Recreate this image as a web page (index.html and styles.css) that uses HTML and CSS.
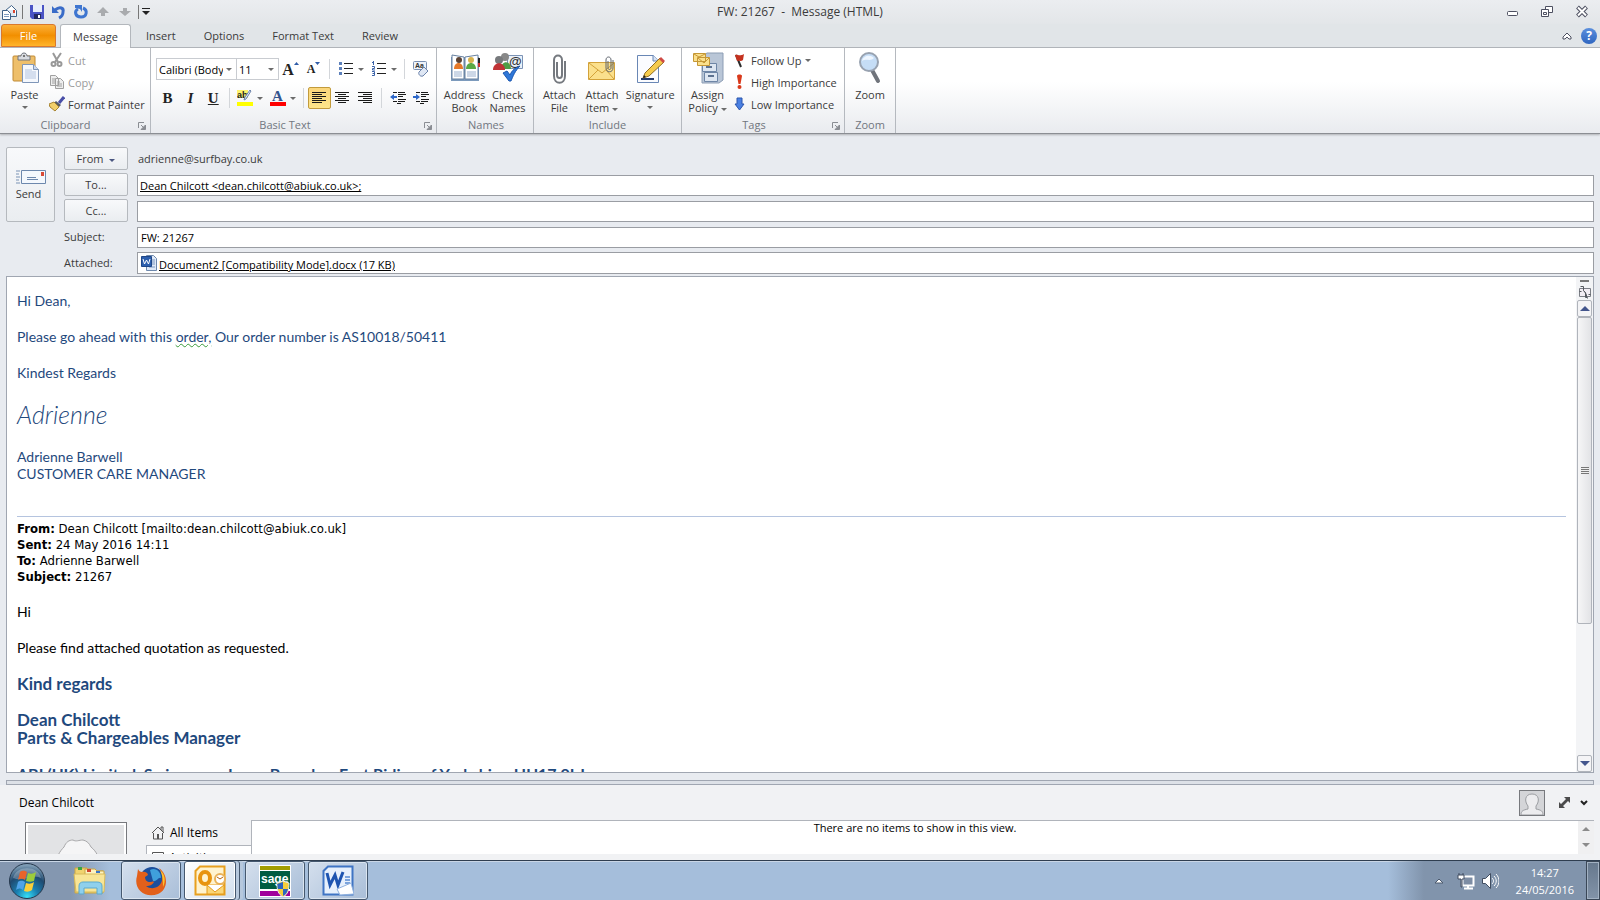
FILE: index.html
```
<!DOCTYPE html>
<html lang="en">
<head>
    <meta charset="UTF-8">
    <meta name="viewport" content="width=device-width, initial-scale=1.0">
    <title>FW: 21267 - Message (HTML)</title>
    <link rel="stylesheet" href="styles.css">
</head>
<body>
    <header class="titlebar">
        <div class="quick-access">
            <svg width="20" height="18" viewBox="0 0 20 18"><path d="M5.500 7.500l6-5 5 5v6h-11z" fill="#fff" stroke="#3f6187"/><path d="M7 7h8v6H7z" fill="#dce7f4"/><path d="M13 7h2v3h-2z" fill="#d9432f"/><path d="M2.500 7.500h5l3 3v6h-8z" fill="#fff" stroke="#3f6187"/><path d="M4 11.500h5M4 13.500h5" stroke="#7f9cc0"/></svg>
            <span class="bar-line"></span>
            <button class="quick-btn" aria-label="Save"><svg width="16" height="16" viewBox="0 0 16 16"><path d="M1 1h14v14H3l-2-2z" fill="#4a53c4"/><path d="M4 1h9v7H4z" fill="#e8eefb"/><path d="M5 10h7v5H5z" fill="#23285f"/><path d="M9 11h2v3H9z" fill="#fff"/></svg></button>
            <button class="quick-btn" aria-label="Undo"><svg width="16" height="16" viewBox="0 0 16 16"><path d="M4 6c5-4 9-2 8 2 0 3-2 5-4 6" fill="none" stroke="#3a6cc8" stroke-width="3"/><path d="M1 2v7h7z" fill="#3a6cc8"/></svg></button>
            <button class="quick-btn" aria-label="Repeat"><svg width="16" height="16" viewBox="0 0 16 16"><path d="M10 4c5 2 4 9-2 9S1 7 5 5" fill="none" stroke="#3f76d0" stroke-width="3"/><path d="M2 1h7v7L7 5 2 4z" fill="#3f76d0"/></svg></button>
            <button class="quick-btn" aria-label="Previous"><svg width="16" height="16" viewBox="0 0 16 16"><path d="M8 3l6 6h-4v3H6V9H2z" fill="#a9abae"/></svg></button>
            <button class="quick-btn" aria-label="Next"><svg width="16" height="16" viewBox="0 0 16 16"><path d="M8 12l6-5h-4V4H6v3H2z" fill="#a9abae"/></svg></button>
            <span class="bar-line"></span>
            <button class="more-btn" aria-label="Customize"><svg width="8" height="8" viewBox="0 0 8 8"><path d="M0 0h8v1H0zM0 3h8L4 7z" fill="#222"/></svg></button>
        </div>
        <h1 class="window-title">FW: 21267 &nbsp;- &nbsp;Message (HTML)</h1>
        <div class="window-controls">
            <button aria-label="Minimize"><svg width="14" height="14" viewBox="0 0 14 14"><rect x="2.500" y="6.500" width="10" height="4" rx="1" fill="#fff" stroke="#4d5061"/></svg></button>
            <button aria-label="Restore"><svg width="14" height="14" viewBox="0 0 14 14"><path d="M5.500 1.500h7v6h-7z" fill="#fff" stroke="#4d5061"/><path d="M1.500 4.500h7v7h-7z" fill="#fff" stroke="#4d5061"/><path d="M3.500 7.500h3v2h-3z" fill="none" stroke="#4d5061"/></svg></button>
            <button aria-label="Close"><svg width="14" height="14" viewBox="0 0 14 14"><path d="M2.500 2L11.500 11M11.500 2L2.500 11" stroke="#4d5061" stroke-width="4"/><path d="M3 2.500L11 10.500M11 2.500L3 10.500" stroke="#fff" stroke-width="2"/></svg></button>
        </div>
    </header>

    <nav class="tabs">
        <button class="tab tab-file">File</button>
        <button class="tab tab-active">Message</button>
        <button class="tab">Insert</button>
        <button class="tab">Options</button>
        <button class="tab">Format Text</button>
        <button class="tab">Review</button>
        <div class="tabs-right">
            <button aria-label="Minimize ribbon"><svg width="10" height="8" viewBox="0 0 10 8"><path d="M1 5l4-4 4 4v2H7L5 5 3 7H1z" fill="#fff" stroke="#4d5061"/></svg></button>
            <button class="help-btn" aria-label="Help">?</button>
        </div>
    </nav>

    <main class="ribbon">
        <section class="group group-clipboard">
            <div class="group-body">
                <button class="big-btn">
                    <svg width="32" height="32" viewBox="0 0 32 32"><rect x="4" y="4" width="22" height="25" rx="1" fill="#eebf6b" stroke="#c08a35"/><path d="M9 4h3c0-4 6-4 6 0h3v4H9z" fill="#d8dbe0" stroke="#70757d"/><circle cx="15" cy="4" r="1" fill="#555"/><path d="M13.500 12.500h11l5 5v13h-16z" fill="#f5f8fd" stroke="#7f96b8"/><path d="M24.500 12.500v5h5" fill="#cddaf0" stroke="#7f96b8"/><path d="M16 18h7M16 20h11M16 22h11M16 24h11M16 26h11" stroke="#b3c4df"/></svg>
                    <span>Paste</span><i class="arrow"></i>
                </button>
                <div class="small-list">
                    <button class="small-btn" disabled><svg width="16" height="16" viewBox="0 0 16 16"><path d="M4 1l5 9M12 1L6 10" stroke="#999" stroke-width="2"/><circle cx="4.500" cy="12" r="2" fill="none" stroke="#999" stroke-width="2"/><circle cx="10.500" cy="12" r="2" fill="none" stroke="#999" stroke-width="2"/></svg>Cut</button>
                    <button class="small-btn" disabled><svg width="16" height="16" viewBox="0 0 16 16"><path d="M1.500 1.500h5l3 3v7h-8zM6.500 4.500h5l3 3v7h-8z" fill="#eee" stroke="#a0a0a0"/><path d="M3 5h3M3 7h3M3 9h3M8 8h3M8 10h5M8 12h5" stroke="#a0a0a0"/></svg>Copy</button>
                    <button class="small-btn"><svg width="16" height="16" viewBox="0 0 16 16"><path d="M15 1l-5 6" stroke="#4a4fa8" stroke-width="3"/><path d="M7 5l5 4-2 2-5-4z" fill="#555b66"/><path d="M5 6l5 5-4 4-5-4-1-3z" fill="#f1cf6b" stroke="#a78432"/></svg>Format Painter</button>
                </div>
            </div>
            <h2 class="group-label has-launcher">Clipboard</h2>
            <button class="launcher" aria-label="Clipboard options"><svg width="8" height="8" viewBox="0 0 8 8"><path d="M.5 6V.5H6" fill="none" stroke="#8a8d93"/><path d="M7.500 3v4.500H3L7.500 3zM3 3l3 3" fill="#8a8d93" stroke="#8a8d93"/></svg></button>
        </section>

        <section class="group group-text">
            <div class="text-rows">
                <div class="text-row">
                    <label class="picker picker-font"><select aria-label="Font"><option>Calibri (Body)</option></select><i class="arrow"></i></label>
                    <label class="picker picker-size"><select aria-label="Font size"><option>11</option></select><i class="arrow"></i></label>
                    <button class="tool-btn letter" aria-label="Grow font"><span class="letter-grow">A</span><svg class="mark" width="5" height="4" viewBox="0 0 5 4"><path d="M0 3l2.500-3L5 3z" fill="#2f5ca8"/></svg></button>
                    <button class="tool-btn letter" aria-label="Shrink font"><span class="letter-shrink">A</span><svg class="mark" width="5" height="4" viewBox="0 0 5 4"><path d="M0 0l2.500 3L5 0z" fill="#2f5ca8"/></svg></button>
                    <span class="sep"></span>
                    <button class="tool-btn split" aria-label="Bullets"><svg width="16" height="16" viewBox="0 0 16 16"><path d="M6 2.500h9M6 7.500h9M6 12.500h9" stroke="#222"/><path d="M1 1h3v3H1zM1 6h3v3H1zM1 11h3v3H1z" fill="#5c80bb"/></svg><i class="arrow"></i></button>
                    <button class="tool-btn split" aria-label="Numbering"><svg width="16" height="16" viewBox="0 0 16 16"><path d="M6 2.500h9M6 7.500h9M6 12.500h9" stroke="#222"/><path d="M2.500 0v4M1 1.500h2M1 5.500h2.500v2H1.500v1.500H4M1 10.500h2.500v4H1M1.500 12.500H3" fill="none" stroke="#3a62a8"/></svg><i class="arrow"></i></button>
                    <span class="sep"></span>
                    <button class="tool-btn" aria-label="Clear formatting"><svg width="18" height="18" viewBox="0 0 18 18"><rect x="1.500" y="1.500" width="13" height="8" rx="1" fill="#eef3fa" stroke="#7a90b3"/><text x="3" y="8" class="icon-text">Aa</text><path d="M7 12l5-5 4 4-5 5c-3 1-5-2-4-4z" fill="#dfe7f4" stroke="#6c83ab"/></svg></button>
                </div>
                <div class="text-row">
                    <button class="tool-btn fmt"><b>B</b></button>
                    <button class="tool-btn fmt"><em>I</em></button>
                    <button class="tool-btn fmt"><u>U</u></button>
                    <span class="sep"></span>
                    <button class="tool-btn split" aria-label="Highlight"><svg width="16" height="16" viewBox="0 0 16 16"><path d="M0 0h11v8H0z" fill="#fdf36a"/><text x="0" y="8" class="icon-ab">ab</text><path d="M14 1l-5 8-2 1 1-3 5-7z" fill="#e4ecf7" stroke="#6c83ab"/><path d="M0 12h16v4H0z" fill="#ffff00"/></svg><i class="arrow"></i></button>
                    <button class="tool-btn split" aria-label="Font color"><svg width="16" height="16" viewBox="0 0 16 16"><text x="2" y="11" class="icon-a">A</text><path d="M0 12h16v4H0z" fill="#f00"/></svg><i class="arrow"></i></button>
                    <span class="sep"></span>
                    <button class="tool-btn pressed" aria-label="Align left"><svg width="15" height="14" viewBox="0 0 15 14"><path d="M0 1.500h14M0 3.500h10M0 5.500h14M0 7.500h10M0 9.500h14M0 11.500h10" stroke="#1a1a1a"/></svg></button>
                    <button class="tool-btn" aria-label="Center"><svg width="15" height="14" viewBox="0 0 15 14"><path d="M0 1.500h14M3 3.500h8M0 5.500h14M3 7.500h8M0 9.500h14M3 11.500h8" stroke="#1a1a1a"/></svg></button>
                    <button class="tool-btn" aria-label="Align right"><svg width="15" height="14" viewBox="0 0 15 14"><path d="M0 1.500h14M5 3.500h9M0 5.500h14M5 7.500h9M0 9.500h14M5 11.500h9" stroke="#1a1a1a"/></svg></button>
                    <span class="sep"></span>
                    <button class="tool-btn" aria-label="Decrease indent"><svg width="16" height="14" viewBox="0 0 16 14"><path d="M3 1.500h4M8 1.500h7M8 3.500h8M8 5.500h5M8 8.500h8M3 10.500h4M8 10.500h7M7 12.500h4" stroke="#1a1a1a"/><path d="M0 6l4-3v2h3v2H4v2z" fill="#2d67c9"/></svg></button>
                    <button class="tool-btn" aria-label="Increase indent"><svg width="16" height="14" viewBox="0 0 16 14"><path d="M3 1.500h4M8 1.500h7M8 3.500h8M8 5.500h5M8 8.500h8M3 10.500h4M8 10.500h7M7 12.500h4" stroke="#1a1a1a"/><path d="M7 6L3 3v2H0v2h3v2z" fill="#2d67c9"/></svg></button>
                </div>
            </div>
            <h2 class="group-label has-launcher">Basic Text</h2>
            <button class="launcher" aria-label="Font options"><svg width="8" height="8" viewBox="0 0 8 8"><path d="M.5 6V.5H6" fill="none" stroke="#8a8d93"/><path d="M7.500 3v4.500H3L7.500 3zM3 3l3 3" fill="#8a8d93" stroke="#8a8d93"/></svg></button>
        </section>

        <section class="group group-names">
            <div class="group-body">
                <button class="big-btn">
                    <svg width="32" height="32" viewBox="0 0 32 32"><path d="M2 5h28v24H2z" fill="#7c9abc"/><path d="M3 3l12 2v22H3zM29 3L16 5v22h13z" fill="#fff" stroke="#66809f"/><path d="M29 6h2v5h-2z" fill="#222"/><path d="M29 11h2v4h-2z" fill="#c33"/><circle cx="10" cy="8" r="3" fill="#5b4234"/><path d="M5 17c0-8 9-8 9 0z" fill="#e5792a"/><circle cx="22" cy="8" r="3" fill="#d8b34e"/><path d="M17 17c0-8 10-8 10 0z" fill="#5aa845"/><path d="M5 20h8M5 22h8M5 24h8M18 20h9M18 22h9M18 24h9" stroke="#9ab0ce"/></svg>
                    <span>Address<br>Book</span>
                </button>
                <button class="big-btn">
                    <svg width="32" height="32" viewBox="0 0 32 32"><path d="M15.500 3.500h15v13h-15z" fill="#eaf1fa" stroke="#7c93b5"/><text x="17" y="14" class="icon-at">@</text><circle cx="13" cy="5" r="4" fill="#888"/><path d="M9 17c0-9 10-9 10 0z" fill="#4f9d46"/><circle cx="7" cy="8" r="4" fill="#77797c"/><path d="M1 18c0-9 12-9 12 0z" fill="#c03336"/><path d="M11 21l4-2 3 4c2-5 5-7 10-9-5 5-7 10-9 15h-2z" fill="#2f77d8" stroke="#1b57b0"/></svg>
                    <span>Check<br>Names</span>
                </button>
            </div>
            <h2 class="group-label">Names</h2>
        </section>

        <section class="group group-include">
            <div class="group-body">
                <button class="big-btn">
                    <svg width="32" height="32" viewBox="0 0 32 32"><path d="M14 10v13c0 4 5 4 5 0V8c0-6-8-6-8 0v16c0 9 11 9 11 0V9" fill="none" stroke="#75797f" stroke-width="2"/></svg>
                    <span>Attach<br>File</span>
                </button>
                <button class="big-btn">
                    <svg width="32" height="32" viewBox="0 0 32 32"><path d="M2.500 10.500h26v17h-26z" fill="#fbe08c" stroke="#d3a23a"/><path d="M3 11l13 10 12-10M3 27l9-9M28 27l-8-9" fill="none" stroke="#d3a23a"/><path d="M22 9v7c0 2 3 2 3 0V8c0-4-5-4-5 0v8c0 5 7 5 7 0V8" fill="none" stroke="#5e646d"/></svg>
                    <span>Attach<br>Item <i class="arrow"></i></span>
                </button>
                <button class="big-btn big-wide">
                    <svg width="32" height="32" viewBox="0 0 32 32"><path d="M3.500 3.500h16l5 5v22h-21z" fill="#fbfcff" stroke="#6987b5"/><path d="M19 3v6h6" fill="#d7e2f3" stroke="#6987b5"/><path d="M7 27h13" stroke="#223c70" stroke-width="2"/><path d="M9 26l2-5L26 6l4 4-15 14z" fill="#f5cb4d" stroke="#8f6d22"/><path d="M25 7l2-2 4 4-2 2z" fill="#cf4a45"/><path d="M9 26l1-3 2 2z" fill="#222"/></svg>
                    <span>Signature</span><i class="arrow"></i>
                </button>
            </div>
            <h2 class="group-label">Include</h2>
        </section>

        <section class="group group-tags">
            <div class="group-body">
                <button class="big-btn">
                    <svg width="32" height="32" viewBox="0 0 32 32"><path d="M12 3l3-2h16v27l-4 3H10V5z" fill="#b9c6d7" stroke="#8c9db4"/><path d="M10.500 11.500h14v8h-14zM12.500 20.500h13v9h-13z" fill="#dde6f1" stroke="#6e86a6"/><path d="M14 15h6M16 24h6" stroke="#5d7290" stroke-width="2"/><path d="M1.500 1.500h12v8h-12zM5.500 5.500h12v8h-12z" fill="#fbe08c" stroke="#c59735"/><path d="M6 6l6 5 5-5M2 2l5 3 6-3" fill="none" stroke="#c59735"/></svg>
                    <span>Assign<br>Policy <i class="arrow"></i></span>
                </button>
                <div class="small-list">
                    <button class="small-btn"><svg width="16" height="16" viewBox="0 0 16 16"><path d="M4 3l5 12" stroke="#2b2b2b" stroke-width="2"/><path d="M3 3c3-1 4 2 9-1l-1 6c-3 2-3 0-6 1z" fill="#c4321f"/></svg>Follow Up <i class="arrow"></i></button>
                    <button class="small-btn"><svg width="16" height="16" viewBox="0 0 16 16"><path d="M5 2c0-2 5-2 5 0L8.500 10h-2z" fill="#d9391b"/><circle cx="7.500" cy="13" r="2" fill="#d9391b"/></svg>High Importance</button>
                    <button class="small-btn"><svg width="16" height="16" viewBox="0 0 16 16"><path d="M5 2h5v6h2l-4.500 6L3 8h2z" fill="#4a80e2" stroke="#2a55ad"/></svg>Low Importance</button>
                </div>
            </div>
            <h2 class="group-label has-launcher">Tags</h2>
            <button class="launcher" aria-label="Tag options"><svg width="8" height="8" viewBox="0 0 8 8"><path d="M.5 6V.5H6" fill="none" stroke="#8a8d93"/><path d="M7.500 3v4.500H3L7.500 3zM3 3l3 3" fill="#8a8d93" stroke="#8a8d93"/></svg></button>
        </section>

        <section class="group group-zoom">
            <div class="group-body">
                <button class="big-btn">
                    <svg width="32" height="32" viewBox="0 0 32 32"><path d="M18 18l6 11" stroke="#70747b" stroke-width="4" stroke-linecap="round"/><circle cx="15" cy="10" r="9" fill="#c5ddf6" stroke="#98a2b0" stroke-width="2"/><path d="M8 9c1-5 8-7 12-3-4 4-7 0-12 3z" fill="#eef6ff"/></svg>
                    <span>Zoom</span>
                </button>
            </div>
            <h2 class="group-label">Zoom</h2>
        </section>
    </main>

    <form class="compose">
        <button type="button" class="send-btn">
            <svg width="30" height="16" viewBox="0 0 30 16"><path d="M5.500 1.500h24v13h-24z" fill="#f4f8fd" stroke="#6d88ad"/><path d="M0 2h4M0 5h3M0 8h4M0 11h3M0 14h4" stroke="#7b93b5"/><path d="M25 3h3v4h-3z" fill="#d94a36"/><path d="M11 8.500h9M11 10.500h11" stroke="#6d88ad"/></svg>
            <span>Send</span>
        </button>
        <div class="fields">
            <button type="button" class="field-btn">From <i class="arrow arrow-blue"></i></button>
            <output class="from-value">adrienne@surfbay.co.uk</output>
            <button type="button" class="field-btn">To...</button>
            <input class="field underlined" aria-label="To" value="Dean Chilcott &lt;dean.chilcott@abiuk.co.uk&gt;;">
            <button type="button" class="field-btn">Cc...</button>
            <input class="field" aria-label="Cc">
            <label class="field-label" for="subject">Subject:</label>
            <input class="field" id="subject" value="FW: 21267">
            <span class="field-label">Attached:</span>
            <div class="field attachment">
                <svg width="16" height="16" viewBox="0 0 16 16"><path d="M5.500.5h7l3 3v12h-10z" fill="#dfe9f7" stroke="#6d88ad"/><path d="M11 5h3M11 7h3M11 9h3M8 12h6" stroke="#7d99c2"/><path d="M.5 1.500h10v10H.5z" fill="#2c5fae" stroke="#1f4788"/><path d="M2 4l1.500 5L5.500 5l2 4L9 4" fill="none" stroke="#fff"/></svg>
                <a href="#">Document2 [Compatibility Mode].docx (17 KB)</a>
            </div>
        </div>
    </form>

    <div class="editor">
        <article class="message">
            <p>Hi Dean,</p>
            <p>Please go ahead with this <span class="grammar">order,</span> Our order number is AS10018/50411</p>
            <p>Kindest Regards</p>
            <p class="signature">Adrienne</p>
            <p class="sender">Adrienne Barwell<br>CUSTOMER CARE MANAGER</p>
            <div class="quoted-head">
                <b>From:</b> Dean Chilcott [mailto:dean.chilcott@abiuk.co.uk]<br>
                <b>Sent:</b> 24 May 2016 14:11<br>
                <b>To:</b> Adrienne Barwell<br>
                <b>Subject:</b> 21267
            </div>
            <div class="quoted">
                <p>Hi</p>
                <p>Please find attached quotation as requested.</p>
            </div>
            <div class="quoted-sign">
                <p>Kind regards</p>
                <p>Dean Chilcott<br>Parts &amp; Chargeables Manager</p>
                <p class="address">ABI (UK) Limited, Swinemoor Lane, Beverley, East Riding of Yorkshire, HU17 0LJ</p>
            </div>
        </article>
        <div class="scrollbar">
            <span class="split-handle"></span>
            <svg width="14" height="14" viewBox="0 0 14 14"><path d="M1.500 2.500h11v8h-11z" fill="#f3eef4" stroke="#7b7e85"/><path d="M2.500.5h3v4l2 2v5h2v1M5.500 4.500l3 4v3M1.500 5.500h2M10.500 8.500h2" fill="none" stroke="#55585e"/></svg>
            <button class="scroll-btn" aria-label="Scroll up"><svg width="10" height="5" viewBox="0 0 10 5"><path d="M0 5l5-5 5 5z" fill="#43558c"/></svg></button>
            <div class="scroll-thumb"><span></span></div>
            <button class="scroll-btn scroll-down" aria-label="Scroll down"><svg width="10" height="5" viewBox="0 0 10 5"><path d="M0 0l5 5 5-5z" fill="#43558c"/></svg></button>
        </div>
    </div>

    <aside class="people">
        <div class="splitter"></div>
        <div class="people-head">
            <span class="people-name">Dean Chilcott</span>
            <button class="avatar" aria-label="Dean Chilcott"><svg width="24" height="24" viewBox="0 0 24 24"><path d="M1 24c0-4 2-5 7-6v-3C4 10 5 3 12 3s8 7 4 12v3c5 1 7 2 7 6z" fill="#ececee" stroke="#9b9da1"/></svg></button>
            <button class="people-btn" aria-label="Expand"><svg width="11" height="11" viewBox="0 0 11 11"><path d="M5 0h6v6L9 4 4 9l2 2H0V5l2 2 5-5z" fill="#4b4b4b"/></svg></button>
            <button class="people-btn" aria-label="Collapse"><svg width="8" height="6" viewBox="0 0 8 6"><path d="M1 1l3 3 3-3" fill="none" stroke="#222" stroke-width="2"/></svg></button>
        </div>
        <div class="people-body">
            <div class="photo"><svg width="96" height="96" viewBox="0 0 96 96"><path d="M28 40c0-8 4-14 8-18 2-5 5-7 9-7 3 2 6 0 10 0 4 1 6 3 8 7 6 5 8 10 8 18-2 20-10 30-22 30S28 60 28 40z" fill="#f5f5f6" stroke="#a8a8aa"/></svg></div>
            <div class="people-tabs">
                <button class="people-tab"><svg width="14" height="14" viewBox="0 0 14 14"><path d="M1 7l6-6 6 6M10 4V1h2v5M2.500 7v6h9V7" fill="none" stroke="#555"/><path d="M6 8h2v5H6z" fill="#555"/></svg>All Items</button>
                <button class="people-tab people-tab-sub"><svg width="12" height="12" viewBox="0 0 12 12"><path d="M.5.500h11v11H.5z" fill="#fff" stroke="#555"/></svg>Activities</button>
            </div>
            <div class="people-items">There are no items to show in this view.</div>
            <div class="people-scroll">
                <svg width="8" height="5" viewBox="0 0 8 5"><path d="M0 4l4-4 4 4z" fill="#8b8b8b"/></svg>
                <svg width="8" height="5" viewBox="0 0 8 5"><path d="M0 0l4 4 4-4z" fill="#8b8b8b"/></svg>
            </div>
        </div>
    </aside>

    <footer class="taskbar">
        <button class="start-btn" aria-label="Start">
            <svg width="38" height="38" viewBox="0 0 38 38"><defs><radialGradient id="orb" cx="50%" cy="95%" r="90%"><stop offset="0" stop-color="#35e0f7"/><stop offset=".35" stop-color="#1b7fb0"/><stop offset=".7" stop-color="#1f4a70"/><stop offset="1" stop-color="#7f9db5"/></radialGradient></defs><circle cx="19" cy="19" r="17.500" fill="url(#orb)" stroke="#26384d"/><path d="M5 16C8 3 30 3 33 16c-8-4-18 4-28 0z" fill="#fff" opacity=".25"/><path d="M12 10c3-2 5-1 7 0l-2 8c-2-1-4-2-7 0z" fill="#e8642b"/><path d="M20 11c3 1 5 1 8-1l-2 9c-3 1-5 1-8 0z" fill="#9ccc3c"/><path d="M10 20c3-2 5-1 7 0l-2 8c-2-2-4-2-7 0z" fill="#4fa3e8"/><path d="M18 21c3 1 5 1 8-1l-2 8c-3 2-5 2-8 1z" fill="#fbcf3a"/></svg>
        </button>
        <button class="pin-btn" aria-label="Explorer">
            <svg width="34" height="32" viewBox="0 0 34 32"><path d="M2 3h12l2 3h14v22H2z" fill="#f0d36f" stroke="#c9a544"/><path d="M12 4h10l2 2h7v4H12z" fill="#fdf3c0" stroke="#c9a544"/><path d="M5 2h4v3H5z" fill="#3aa443"/><path d="M14 4h4v3h-4z" fill="#d2452c"/><path d="M23 6h4v2h-4z" fill="#3a76c8"/><path d="M1 9h31l-1 18H3z" fill="#f8e596" stroke="#d8ba5a"/><path d="M6 29v-8c0-3 2-4 4-4h14c3 0 5 1 5 4v8h-5v-6H11v6z" fill="#8fd0ec" stroke="#5ba9cf"/></svg>
        </button>
        <div class="task-list">
            <button class="task-btn" aria-label="Firefox">
                <svg width="32" height="32" viewBox="0 0 32 32"><circle cx="17" cy="14" r="12" fill="#1c4f9c"/><path d="M15 5c6-3 11 2 11 8-3-1-4 4-8 3z" fill="#3fa0dc"/><path d="M3 4c1 2 2 3 4 3 3-1 6 1 6 3l-3 2c0 3 2 5 5 5 2 0 3-1 4 0-2 4-6 4-8 4 6 5 15 1 16-6 1-5-1-9-3-12 9 6 10 21-1 26C10 34-2 24 2 11z" fill="#e2601b"/><path d="M25 5c5 4 6 11 3 17 0-5 0-11-3-17z" fill="#fbc32e"/></svg>
            </button>
            <button class="task-btn task-stacked" aria-label="Outlook">
                <svg width="32" height="32" viewBox="0 0 32 32"><path d="M6 1.500h24.500v28h-29V6z" fill="#fff3cf" stroke="#e8a01f" stroke-width="2"/><path d="M13 20h17v9H13z" fill="#fbd779" stroke="#e49a1b"/><path d="M13 20l8 7 9-7" fill="#fff" stroke="#e49a1b"/><ellipse cx="11" cy="13" rx="5" ry="6" fill="none" stroke="#e8940f" stroke-width="4"/><circle cx="26" cy="14" r="5" fill="#fff" stroke="#e9b25a" stroke-width="2"/><path d="M23 12l3 2 3-2" fill="none" stroke="#b4620a"/></svg>
            </button>
            <button class="task-btn" aria-label="Sage">
                <svg width="32" height="32" viewBox="0 0 32 32"><path d="M0 0h32v32H0z" fill="#fff"/><path d="M1 1h30v4H1z" fill="#a29d00"/><path d="M1 6h30v18H1z" fill="#005c41"/><path d="M1 26h30v5H1z" fill="#a0009b"/><text x="2" y="18" class="icon-sage">sage</text><path d="M18 18l6-2 6 2c0 7-1 11-6 14-5-3-6-7-6-14z" fill="#f6cf3a" stroke="#e8edf3"/><path d="M24 17v7h-5c-1-2 0-4-1-5zM24 24h5c-1 4-2 5-5 7z" fill="#2c66c0"/></svg>
            </button>
            <button class="task-btn" aria-label="Word">
                <svg width="32" height="32" viewBox="0 0 32 32"><path d="M6 1.500h24.500v28h-29V6z" fill="#e7f0fc" stroke="#3f74c4" stroke-width="2"/><path d="M23 12h5M23 15h5M23 18h5" stroke="#7ba3dc" stroke-width="2"/><path d="M5 8l3 12 5-10 3 10 5-13" fill="none" stroke="#1e54b0" stroke-width="3"/><path d="M15 24l14-6 3 11-14 1z" fill="#fff" stroke="#8fb0de"/></svg>
            </button>
        </div>
        <div class="tray">
            <svg width="10" height="6" viewBox="0 0 10 6"><path d="M1 5l4-4 4 4z" fill="#fff" stroke="#4c5a6e"/></svg>
            <svg width="18" height="18" viewBox="0 0 18 18"><path d="M5.500 4.500h11v9h-11z" fill="#7d8da4" stroke="#fff" stroke-width="2"/><path d="M7 16.500h9M11 14v2" stroke="#fff" stroke-width="2"/><path d="M1 3h6v4H5v8H4V7H1zM2 1v2M6 1v2" fill="#fff" stroke="#404d60"/></svg>
            <svg width="18" height="18" viewBox="0 0 18 18"><path d="M1.500 6.500h3l5-5v15l-5-5h-3z" fill="#fff" stroke="#404d60"/><path d="M11 6c2 2 2 4 0 6M13 4c3 3 3 7 0 10M15 2c4 4 4 10 0 14" fill="none" stroke="#fff"/></svg>
            <time class="clock">14:27<br>24/05/2016</time>
            <button class="show-desktop" aria-label="Show desktop"></button>
        </div>
    </footer>
</body>
</html>
```
FILE: styles.css
```
* {
    margin: 0;
    padding: 0;
    box-sizing: border-box;
}

body {
    display: flex;
    flex-direction: column;
    height: 100vh;
    overflow: hidden;
    background: #e8ebf0;
    color: #3b3b3b;
    font-family: 'Open Sans', 'Noto Sans', sans-serif;
    font-size: 11px;
    line-height: 13px;
}

button,
input,
select {
    font: inherit;
    color: inherit;
    background: none;
    border: none;
    border-radius: 0;
}

svg {
    display: block;
    flex: none;
}

h1,
h2 {
    font-size: 11px;
    font-weight: 400;
}

.arrow {
    display: inline-block;
    flex: none;
    vertical-align: middle;
    border: 3px solid transparent;
    border-top-color: #6b6b6b;
    border-bottom: none;
}

.arrow-blue {
    margin-left: 3px;
    border-top-color: #4a5680;
}

/* Title bar */
.titlebar {
    display: grid;
    grid-template-columns: 1fr auto 1fr;
    align-items: center;
    height: 24px;
    background: linear-gradient(#ebedf0, #e3e6e9);
}

.quick-access {
    display: flex;
    align-items: center;
}

.quick-btn {
    width: 22px;
    padding-left: 3px;
}

.bar-line {
    width: 1px;
    height: 14px;
    margin: 0 3px 0 2px;
    background: #777;
}

.window-title {
    font-size: 12px;
    line-height: 24px;
}

.window-controls {
    display: flex;
    justify-content: flex-end;
    gap: 21px;
    padding-right: 11px;
}

/* Ribbon tabs */
.tabs {
    display: flex;
    gap: 2px;
    height: 24px;
    padding-left: 1px;
    background: #e1e5e8;
    border-bottom: 1px solid #b3b7bc;
}

.tab {
    height: 23px;
    padding: 0 13px;
}

.tab-file {
    width: 55px;
    margin-right: 2px;
    border: 1px solid #d9782d;
    border-radius: 3px 3px 0 0;
    background: linear-gradient(#fbb03a, #f28f00 50%, #ffb52c);
    color: #fff;
}

.tab-active {
    width: 71px;
    height: 24px;
    padding: 0;
    border: 1px solid #b3b7bc;
    border-bottom: none;
    border-radius: 3px 3px 0 0;
    background: #fff;
}

.tabs-right {
    display: flex;
    align-items: center;
    gap: 9px;
    margin-left: auto;
    padding-right: 3px;
}

.help-btn {
    width: 16px;
    height: 16px;
    border-radius: 50%;
    background: linear-gradient(#5b8fdd, #2f66c0);
    color: #fff;
    font-weight: 700;
    font-size: 12px;
    line-height: 16px;
}

/* Ribbon */
.ribbon {
    display: flex;
    flex: none;
    height: 86px;
    background: linear-gradient(#fff 40%, #e9ebef);
    border-bottom: 1px solid #8b8e93;
    box-shadow: 0 1px 2px rgba(0, 0, 0, 0.25);
}

.group {
    position: relative;
    display: flex;
    flex-direction: column;
    border-right: 1px solid #b5b9bf;
    padding: 0 4px;
}

.group-clipboard {
    width: 151px;
    padding-left: 3px;
}

.group-text {
    width: 286px;
    padding-left: 5px;
}

.group-names {
    width: 97px;
    padding-left: 6px;
}

.group-include {
    width: 148px;
}

.group-tags {
    width: 163px;
}

.group-zoom {
    width: 51px;
}

.group-body {
    display: flex;
    flex: 1;
}

.group-label {
    height: 15px;
    color: #717680;
    text-align: center;
}

.has-launcher {
    padding-right: 18px;
}

.launcher {
    position: absolute;
    right: 4px;
    bottom: 3px;
}

.big-btn {
    display: flex;
    flex-direction: column;
    align-items: center;
    width: 43px;
    padding-top: 4px;
    white-space: nowrap;
}

.big-btn svg {
    margin-bottom: 4px;
}

.big-btn > .arrow {
    margin-top: 5px;
}

.big-wide {
    width: 54px;
}

.small-list {
    display: flex;
    flex-direction: column;
    padding-top: 1px;
}

.small-btn {
    display: flex;
    align-items: center;
    gap: 3px;
    height: 22px;
    padding-left: 3px;
    white-space: nowrap;
}

.small-btn:disabled {
    color: #9b9b9b;
}

.text-rows {
    display: flex;
    flex: 1;
    flex-direction: column;
    gap: 7px;
    padding-top: 10px;
}

.text-row {
    display: flex;
    align-items: center;
    height: 22px;
}

.picker {
    display: flex;
    align-items: center;
    height: 22px;
    padding: 0 4px 0 2px;
    border: 1px solid #c9ccd1;
    background: #fff;
    color: #000;
}

.picker select {
    flex: 1;
    min-width: 0;
    margin-right: 3px;
    appearance: none;
}

.picker-font {
    width: 81px;
}

.picker-size {
    width: 43px;
    margin-left: -1px;
}

.tool-btn {
    display: flex;
    align-items: center;
    justify-content: center;
    width: 23px;
    height: 22px;
}

.split {
    gap: 4px;
    width: 33px;
}

.pressed {
    border: 1px solid #c29b3c;
    border-radius: 2px;
    background: linear-gradient(#fbd67b, #fde58a);
}

.sep {
    width: 1px;
    height: 20px;
    margin: 0 4px;
    background: #d3d6da;
}

.letter,
.fmt {
    font-family: 'Liberation Serif', serif;
    font-weight: 700;
    color: #222;
}

.letter-grow {
    font-size: 16px;
}

.letter-shrink {
    font-size: 12px;
}

.mark {
    align-self: flex-start;
    margin-top: 4px;
}

.fmt {
    font-size: 15px;
}

.icon-text {
    font: 700 7px 'Liberation Sans', sans-serif;
    fill: #333;
}

.icon-ab {
    font: 700 9px 'Liberation Sans', sans-serif;
    fill: #222;
}

.icon-a {
    font: 700 15px 'Liberation Serif', serif;
    fill: #33548e;
}

.icon-at {
    font: 700 13px 'Liberation Sans', sans-serif;
    fill: #333;
}

.icon-sage {
    font: 700 12px 'Liberation Sans', sans-serif;
    fill: #fff;
}

/* Address fields */
.compose {
    display: flex;
    gap: 9px;
    padding: 13px 6px 2px;
}

.send-btn,
.field-btn {
    border: 1px solid #b5b9be;
    border-radius: 2px;
    background: linear-gradient(#f8f9fb, #eaedf0);
}

.send-btn {
    display: flex;
    flex-direction: column;
    align-items: center;
    justify-content: center;
    gap: 2px;
    width: 49px;
    height: 75px;
}

.send-btn span {
    padding-right: 4px;
}

.fields {
    display: grid;
    flex: 1;
    grid-template-columns: 64px 1fr;
    grid-auto-rows: 23px;
    column-gap: 9px;
    row-gap: 3px;
    align-items: end;
}

.field-btn {
    height: 23px;
}

.from-value,
.field-label {
    align-self: center;
}

.from-value {
    padding-left: 1px;
}

.field {
    width: 100%;
    height: 21px;
    padding: 0 3px;
    border: 1px solid #9a9da3;
    background: #fff;
    color: #000;
}

.underlined {
    padding-left: 2px;
    text-decoration: underline;
}

.attachment {
    display: flex;
    align-items: center;
    gap: 2px;
    height: 22px;
}

.attachment a {
    padding-top: 3px;
    color: #000;
}

/* Message body */
.editor {
    display: flex;
    flex: 1;
    min-height: 0;
    margin: 0 6px;
    border: 1px solid #a0a6b1;
    background: #fff;
}

.message {
    flex: 1;
    overflow: hidden;
    padding: 15px 10px 0;
    color: #1f497d;
    font-family: Lato, 'Open Sans', sans-serif;
    font-size: 14px;
    line-height: 18px;
}

.message p {
    margin-bottom: 18px;
}

.grammar {
    text-decoration: underline wavy #3a9a3a 1px;
}

.message .signature {
    font-size: 25px;
    font-style: italic;
    font-weight: 300;
    line-height: 28px;
    margin-bottom: 20px;
}

.message .sender {
    line-height: 17px;
    margin-bottom: 34px;
}

.quoted-head {
    padding-top: 4px;
    border-top: 1px solid #b5c4df;
    color: #000;
    font-family: 'DejaVu Sans Condensed', 'DejaVu Sans', sans-serif;
    font-size: 13px;
    line-height: 16px;
}

.quoted {
    padding-top: 18px;
    color: #000;
}

.quoted-sign {
    font-size: 17px;
    font-weight: 700;
}

.message .address {
    font-size: 16px;
}

.scrollbar {
    display: flex;
    flex-direction: column;
    align-items: center;
    width: 17px;
    background: #f3f4f6;
}

.split-handle {
    width: 9px;
    height: 2px;
    margin: 3px 0 4px;
    background: #777;
}

.scroll-btn {
    display: flex;
    align-items: center;
    justify-content: center;
    width: 15px;
    height: 17px;
    border: 1px solid #b0b4bb;
    border-radius: 2px;
    background: #f4f4f6;
}

.scroll-thumb {
    display: flex;
    align-items: center;
    justify-content: center;
    width: 15px;
    flex: 0 0 62%;
    border: 1px solid #b0b4bb;
    border-radius: 2px;
    background: linear-gradient(90deg, #f6f6f7, #e2e3e6);
}

.scroll-thumb span {
    width: 8px;
    height: 7px;
    background: repeating-linear-gradient(#777 0 1px, #eee 1px 2px);
}

.scroll-down {
    margin-top: auto;
}

/* People pane */
.people {
    flex: none;
    height: 87px;
    padding: 7px 6px 6px;
    background: linear-gradient(#e8ebf0 12px, #f1f2f4 12px);
}

.splitter {
    height: 5px;
    border: 1px solid #a0a6b1;
    background: #dde1e7;
}

.people-head {
    display: flex;
    align-items: center;
    height: 35px;
    padding-left: 13px;
}

.people-name {
    color: #000;
    font-size: 12px;
}

.avatar {
    margin-left: auto;
    margin-right: 9px;
    border: 1px solid #77797d;
    background: #d4d5d8;
}

.people-btn {
    display: flex;
    justify-content: center;
    width: 20px;
}

.people-body {
    display: flex;
    height: 34px;
    overflow: hidden;
}

.photo {
    flex: none;
    width: 102px;
    height: 102px;
    margin: 2px 19px 0;
    padding: 2px;
    border: 1px solid #77797d;
    background: #e2e3e5;
    box-shadow: inset 0 0 0 2px #fff;
}

.people-tabs {
    width: 105px;
    color: #000;
}

.people-tab {
    display: flex;
    align-items: center;
    gap: 5px;
    width: 100%;
    height: 25px;
    padding-left: 5px;
    font-size: 12px;
}

.people-tab-sub {
    border: 1px solid #b0b4bb;
    border-right: none;
    background: #fff;
}

.people-items {
    flex: 1;
    border-top: 1px solid #b0b4bb;
    border-left: 1px solid #b0b4bb;
    background: #fff;
    color: #000;
    text-align: center;
}

.people-scroll {
    display: flex;
    flex-direction: column;
    align-items: center;
    justify-content: space-around;
    width: 16px;
    border-top: 1px solid #b0b4bb;
    background: #f0f0f1;
}

/* Taskbar */
.taskbar {
    display: flex;
    flex: none;
    height: 40px;
    border-top: 1px solid #2f3e50;
    background: linear-gradient(90deg, #8497b0 70px, #a5bedb 110px);
    box-shadow: inset 0 1px 0 #c9d6e6;
}

.start-btn {
    width: 53px;
    padding-left: 8px;
}

.pin-btn {
    width: 68px;
    padding-left: 20px;
}

.task-list {
    display: flex;
    gap: 3px;
}

.task-btn {
    display: flex;
    align-items: center;
    justify-content: center;
    width: 60px;
    height: 39px;
    border: 1px solid #45586f;
    border-radius: 3px;
    background: linear-gradient(135deg, #d4dfed, #a9bed8);
    box-shadow: inset 0 0 0 1px #dbe5f0;
}

.task-stacked {
    width: 52px;
    margin-right: 6px;
    background: linear-gradient(135deg, #fff, #d2dfee);
    box-shadow: inset 0 0 0 1px #fff, 3px 0 0 #b6c8dd, 4px 0 0 #45586f, 7px 0 0 #b6c8dd;
}

.tray {
    display: flex;
    align-items: center;
    gap: 6px;
    margin-left: auto;
    padding-left: 46px;
    background: linear-gradient(90deg, transparent, #8194ac 36px);
    color: #fff;
}

.tray svg:first-child {
    margin-right: 7px;
}

.clock {
    margin: 0 6px 0 11px;
    font-size: 11px;
    line-height: 17px;
    text-align: center;
}

.show-desktop {
    align-self: stretch;
    width: 14px;
    border: 1px solid #3a4757;
    background: linear-gradient(#66788d, #8293a8);
    box-shadow: inset 0 0 0 1px #a2b1c2;
}
```
